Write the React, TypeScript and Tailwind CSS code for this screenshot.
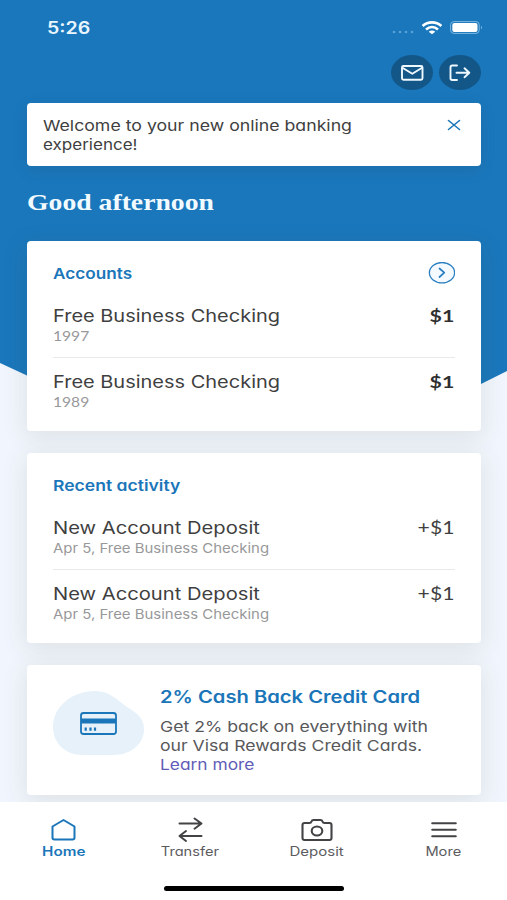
import type { ReactNode } from "react";

const ink = "text-[#3f3f41]";

function StatusBar() {
  return (
    <div className="flex h-[55px] items-center justify-between pl-[47px] pr-[24px]">
      <span className="inline-block origin-left scale-x-[1.15] pt-[2px] text-[17px] font-semibold text-[#e9f6ff]">
        5:26
      </span>

      <div className="flex items-center">
        <svg width="24" height="4" viewBox="0 0 24 4" className="mt-[8px] mr-[6px]" fill="#5ba0d3">
          <circle cx="3" cy="2" r="1.3" />
          <circle cx="9" cy="2" r="1.3" />
          <circle cx="15" cy="2" r="1.3" />
          <circle cx="21" cy="2" r="1.3" />
        </svg>
        <svg width="22" height="14" viewBox="0 0 22 14" className="mr-[7px]" fill="none" stroke="#fff" strokeWidth="2.6">
          <path d="M1.6 5C7 .2 15 .2 20.4 5" />
          <path d="M5 8.4c3.600-3.100 8.400-3.100 12 0" />
          <path d="M11 13.300L7.700 10.700c1.900-1.500 4.700-1.500 6.600 0z" fill="#fff" stroke="none" />
        </svg>
        <svg width="33" height="13" viewBox="0 0 33 13" fill="none">
          <rect x=".6" y=".6" width="28.600" height="11.800" rx="3.200" stroke="#7fb8e2" />
          <rect x="2.300" y="2" width="25.200" height="9" rx="2" fill="#fff" />
          <path d="M31 4.700c1.300.500 1.300 3.100 0 3.600z" fill="#7fb8e2" />
        </svg>
      </div>
    </div>
  );
}

function HeaderButton({ children }: { children: ReactNode }) {
  return (
    <button className="flex h-[35px] w-[42px] items-center justify-center rounded-[50%] bg-[#135789]">
      {children}
    </button>
  );
}

function Card({ children }: { children: ReactNode }) {
  return (
    <section className="rounded-[4px] bg-white px-[26px] shadow-[0_5px_24px_2px_rgba(70,70,40,0.11)]">
      {children}
    </section>
  );
}

type RowProps = {
  title: ReactNode;
  detail: ReactNode;
  amount: ReactNode;
  last?: boolean;
};

function Row({ title, detail, amount, last }: RowProps) {
  return (
    <div className={last ? "flex justify-between pt-[12px]" : "flex justify-between border-b border-[#e9e9ea] pb-[13px]"}>
      <div>
        <div className={`h-[24px] text-[17px] leading-[24px] ${ink}`}>{title}</div>
        <div className="h-[16px] text-[13px] leading-[16px] text-[#98989a]">{detail}</div>
      </div>
      <div className={`pr-[1px] font-[Lato] text-[17.5px] leading-[24px] ${ink}`}>{amount}</div>
    </div>
  );
}

function Account({ number, last }: { number: string; last?: boolean }) {
  return (
    <Row
      last={last}
      title={<span className="inline-block origin-left scale-x-[1.175] whitespace-nowrap">Free Business Checking</span>}
      detail={<span className="inline-block origin-left scale-x-[1.2] font-[Lato]">{number}</span>}
      amount={<span className="inline-block origin-right scale-x-[1.22] font-bold text-[#2f2f31]">$1</span>}
    />
  );
}

function Activity({ last }: { last?: boolean }) {
  return (
    <Row
      last={last}
      title={<span className="inline-block origin-left scale-x-[1.187] whitespace-nowrap">New Account Deposit</span>}
      detail={<span className="inline-block origin-left scale-x-[1.148] whitespace-nowrap">Apr 5, Free Business Checking</span>}
      amount={<span className="inline-block origin-right scale-x-[1.21]">+$1</span>}
    />
  );
}

function Tab({ icon, children }: { icon: ReactNode; children: ReactNode }) {
  return (
    <div className="flex flex-1 flex-col items-center text-[12.5px] leading-[16px] text-[#5c5c5f]">
      <div className="flex h-[28px] items-center">{icon}</div>
      {children}
    </div>
  );
}

export default function App() {
  return (
    <div className="relative isolate flex h-[900px] w-[507px] flex-col overflow-hidden bg-[#f1f6fe] font-[Inter,sans-serif] [font-feature-settings:'cv11']">

      {/* blue backdrop with the pointed lower edge */}
      <svg className="absolute top-0 left-0 -z-10" width="507" height="430" viewBox="0 0 507 430">
        <path d="M0 0H507V371L481 384L420 412H100L27 375.500L0 363Z" fill="#1a77bc" />
      </svg>

      <StatusBar />

      <div className="flex justify-end gap-[6px] pr-[26px]">
        <HeaderButton>
          <svg width="24" height="18" viewBox="0 0 24 18" fill="none" stroke="#eef8ff" strokeWidth="1.900" strokeLinecap="round" strokeLinejoin="round">
            <rect x="2" y="2" width="20.500" height="13.700" rx="1.500" />
            <path d="M2.800 4L12.300 9.800l9.400-5.800" />
          </svg>
        </HeaderButton>
        <HeaderButton>
          <svg width="22" height="18" viewBox="0 0 22 18" fill="none" stroke="#eef8ff" strokeWidth="1.900" strokeLinecap="round" strokeLinejoin="round">
            <path d="M8 1.500H3.200Q1.500 1.500 1.500 3.200V14.300Q1.500 16 3.200 16H8" />
            <path d="M7.500 8.800H20M15.500 4.300L20.300 8.800L15.500 13.200" />
          </svg>
        </HeaderButton>
      </div>

      <main className="pt-[13px] pr-[26px] pl-[27px]">
        <div className="flex h-[63px] justify-between rounded-[4px] bg-white pt-[14px] pr-[20px] pl-[16px] shadow-[0_4px_16px_rgba(60,60,50,0.12)]">
          <p className={`text-[15px] leading-[18.500px] ${ink}`}>
            <span className="inline-block origin-left scale-x-[1.18] whitespace-nowrap">Welcome to your new online banking</span>
            <br />
            <span className="inline-block origin-left scale-x-[1.135]">experience!</span>
          </p>
          <svg className="mt-[2px]" width="14" height="12" viewBox="0 0 14 12" stroke="#1b76b9" strokeWidth="1.600" strokeLinecap="round">
            <path d="M1.500 1.500L12.500 10.500M12.500 1.500L1.500 10.500" />
          </svg>
        </div>

        <h1 className="mt-[21px] h-[54px] font-['Liberation_Serif',serif] text-[24px] leading-[30px] font-bold text-[#f1faff]">
          <span className="inline-block origin-left scale-x-[1.154] whitespace-nowrap">Good afternoon</span>
        </h1>

        <div className="flex flex-col gap-[22px]">
          <Card>
            <div className="h-[190px] pt-[23px]">
              <div className="mb-[20px] flex h-[20px] items-center justify-between">
                <h2 className="text-[15px] font-semibold text-[#1b76b9]">
                  <span className="inline-block origin-left scale-x-[1.145]">Accounts</span>
                </h2>
                <svg width="28" height="24" viewBox="0 0 28 24" fill="none" stroke="#2a7fc0" strokeLinecap="round" strokeLinejoin="round">
                  <ellipse cx="15" cy="10.700" rx="12.600" ry="10.200" strokeWidth="1.300" fill="#f4faff" />
                  <path d="M12.500 6.500L17.300 10.700L12.500 15" strokeWidth="1.700" />
                </svg>
              </div>
              <Account number="1997" />
              <Account number="1989" last />
            </div>
          </Card>

          <Card>
            <div className="h-[190px] pt-[23px]">
              <h2 className="mb-[20px] h-[20px] text-[15px] leading-[20px] font-semibold text-[#1b76b9]">
                <span className="inline-block origin-left scale-x-[1.17] whitespace-nowrap">Recent activity</span>
              </h2>
              <Activity />
              <Activity last />
            </div>
          </Card>

          <Card>
            <div className="flex h-[130px] gap-[15.500px]">
              <svg className="mt-[26px] shrink-0" width="91" height="64" viewBox="0 0 91 64" fill="none">
                <path d="M0 36C0 15 20 0 42 0C57 0 64 9 74 16C84 22 91 27 91 38C91 53 78 64 60 64H30C12 64 0 52 0 36Z" fill="#e7f1fa" />
                <rect x="28" y="22" width="35" height="21" rx="2.500" stroke="#1b76b9" strokeWidth="1.800" />
                <path d="M28 27.500H63V32.500H28Z" fill="#1b76b9" />
                <path d="M32.700 36.500v3.300M37.500 36.500v3.300M42 36.500v3.300" stroke="#1b76b9" strokeWidth="2.200" />
              </svg>
              <div className="pt-[20px]">
                <h2 className="h-[32px] text-[17px] leading-[24px] font-semibold text-[#1b76b9]">
                  <span className="inline-block origin-left scale-x-[1.187] whitespace-nowrap">2% Cash Back Credit Card</span>
                </h2>
                <p className="text-[15px] leading-[19px] text-[#58585b]">
                  <span className="inline-block origin-left scale-x-[1.176] whitespace-nowrap">Get 2% back on everything with</span>
                  <br />
                  <span className="inline-block origin-left scale-x-[1.176] whitespace-nowrap">our Visa Rewards Credit Cards.</span>
                  <br />
                  <a className="inline-block origin-left scale-x-[1.156] text-[#5f5cb8]">Learn more</a>
                </p>
              </div>
            </div>
          </Card>
        </div>
      </main>

      <nav className="z-10 mt-[7px] flex h-[98px] shrink-0 flex-col items-center bg-white">
        <div className="flex w-full pt-[14px]">
          <Tab
            icon={
              <svg width="26" height="24" viewBox="0 0 26 24" fill="none" stroke="#1b76b9" strokeWidth="2" strokeLinejoin="round">
                <path d="M13.500 2L24.500 8.500V19.800Q24.500 21.500 22.500 21.500H4.500Q2.500 21.500 2.500 19.800V8.500Z" />
              </svg>
            }
          >
            <span className="inline-block scale-x-[1.22] font-semibold text-[#1b76b9]">Home</span>
          </Tab>
          <Tab
            icon={
              <svg width="26" height="26" viewBox="0 0 26 26" fill="none" stroke="#434345" strokeWidth="2" strokeLinecap="round" strokeLinejoin="round">
                <path d="M2.500 6.500H24M17.500 1.500L24.500 6.500L17.500 11.700" />
                <path d="M24.500 19H3M9 14L2.500 19L9 24" />
              </svg>
            }
          >
            <span className="inline-block scale-x-[1.17]">Transfer</span>
          </Tab>
          <Tab
            icon={
              <svg width="32" height="24" viewBox="0 0 32 24" fill="none" stroke="#434345" strokeWidth="2.100" strokeLinejoin="round">
                <path d="M3.500 5H8.500Q10 5 10.500 3.500Q11 2 12.500 2H19.500Q21 2 21.500 3.500Q22 5 23.500 5H28.500Q30.500 5 30.500 7V20Q30.500 22 28.500 22H3.500Q1.500 22 1.500 20V7Q1.500 5 3.500 5Z" />
                <ellipse cx="16" cy="13" rx="5.300" ry="4.500" />
              </svg>
            }
          >
            <span className="inline-block scale-x-[1.2]">Deposit</span>
          </Tab>
          <Tab
            icon={
              <svg width="26" height="16" viewBox="0 0 26 16" stroke="#434345" strokeWidth="2" strokeLinecap="round">
                <path d="M1.200 1.200H24.800M1.200 7.700H24.800M1.200 14.200H24.800" />
              </svg>
            }
          >
            <span className="inline-block scale-x-[1.17]">More</span>
          </Tab>
        </div>

        <div className="mt-[26px] h-[5px] w-[180px] rounded-full bg-black" />
      </nav>

    </div>
  );
}
